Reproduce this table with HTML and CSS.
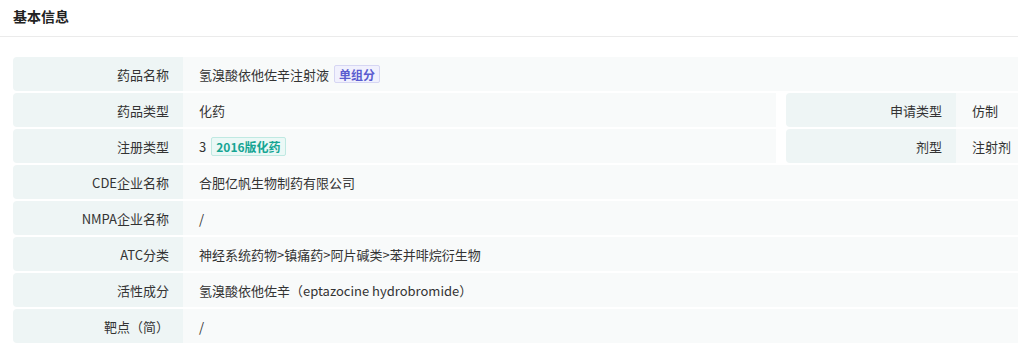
FILE: index.html
```html
<!DOCTYPE html>
<html lang="zh">
<head>
<meta charset="utf-8">
<link rel="stylesheet" href="styles.css">
</head>
<body>
<div class="page">
  <div class="header">基本信息</div>
  <div class="table">
    <div class="row">
      <div class="label">药品名称</div>
      <div class="value">氢溴酸依他佐辛注射液<span class="tag tag-purple">单组分</span></div>
    </div>
    <div class="row split">
      <div class="half">
        <div class="label">药品类型</div>
        <div class="value">化药</div>
      </div>
      <div class="half right">
        <div class="label">申请类型</div>
        <div class="value">仿制</div>
      </div>
    </div>
    <div class="row split">
      <div class="half">
        <div class="label">注册类型</div>
        <div class="value">3<span class="tag tag-teal">2016版化药</span></div>
      </div>
      <div class="half right">
        <div class="label">剂型</div>
        <div class="value">注射剂</div>
      </div>
    </div>
    <div class="row">
      <div class="label">CDE企业名称</div>
      <div class="value">合肥亿帆生物制药有限公司</div>
    </div>
    <div class="row">
      <div class="label">NMPA企业名称</div>
      <div class="value">/</div>
    </div>
    <div class="row">
      <div class="label">ATC分类</div>
      <div class="value">神经系统药物&gt;镇痛药&gt;阿片碱类&gt;苯并啡烷衍生物</div>
    </div>
    <div class="row">
      <div class="label">活性成分</div>
      <div class="value">氢溴酸依他佐辛（eptazocine hydrobromide）</div>
    </div>
    <div class="row">
      <div class="label">靶点（简）</div>
      <div class="value">/</div>
    </div>
  </div>
</div>
</body>
</html>
```

FILE: styles.css
```css
html, body {
  margin: 0;
  padding: 0;
  background: #ffffff;
  overflow: hidden;
}
body {
  font-family: "Noto Sans CJK SC", "Noto Sans", sans-serif;
  color: #333333;
  font-size: 13px;
}
.page {
  width: 1018px;
  overflow: hidden;
}
.header {
  height: 36px;
  box-sizing: border-box;
  padding-left: 13px;
  display: flex;
  align-items: center;
  font-size: 14px;
  font-weight: 700;
  color: #222222;
  border-bottom: 1px solid #ebebeb;
  height: 37px;
  padding-bottom: 4px;
}
.table {
  padding-top: 20px;
  padding-left: 13px;
  width: 1040px;
  display: flex;
  flex-direction: column;
  gap: 2px;
}
.row {
  display: flex;
  height: 34px;
}
.split {
  gap: 10px;
}
.half {
  display: flex;
  width: 763px;
  flex: none;
}
.half.right {
  flex: 1;
  width: auto;
}
.label {
  width: 170px;
  flex: none;
  box-sizing: border-box;
  background: #eef5f5;
  border-radius: 4px 0 0 4px;
  display: flex;
  align-items: center;
  justify-content: flex-end;
  padding-right: 14px;
  color: #333333;
}
.value {
  flex: 1;
  background: #f8fafa;
  display: flex;
  align-items: center;
  padding-left: 16px;
  color: #333333;
}
.tag {
  display: inline-flex;
  align-items: center;
  height: 18px;
  box-sizing: border-box;
  padding: 0 4px;
  border-radius: 2px;
  font-size: 12px;
  font-weight: 700;
  border: 1px solid;
}
.tag-purple {
  margin-left: 5px;
  background: #f1f1fd;
  border-color: #d6d6f3;
  color: #5a5ccf;
}
.tag-teal {
  margin-left: 5px;
  background: #ebf8f6;
  border-color: #bfe9e2;
  color: #16a594;
  height: 19px;
}
```
